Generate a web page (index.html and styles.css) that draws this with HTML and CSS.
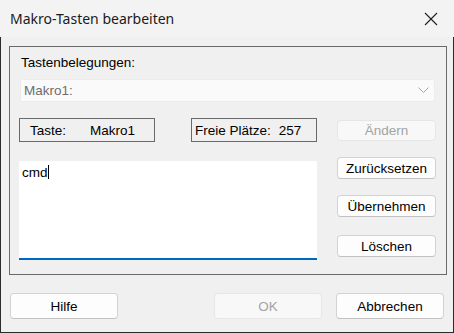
FILE: index.html
```html
<!DOCTYPE html>
<html lang="de">
<head>
    <meta charset="UTF-8">
    <title>Makro-Tasten bearbeiten</title>
    <link rel="stylesheet" href="styles.css">
</head>
<body>
<div class="fenster">
    <div class="titel">
        <span>Makro-Tasten bearbeiten</span>
        <svg class="schliessen" width="14" height="14" viewBox="0 0 14 14">
            <path d="M1 1 L13 13 M13 1 L1 13" stroke="#1f1f1f" stroke-width="1.1" fill="none"/>
        </svg>
    </div>
    <div class="inhalt">
        <div class="gruppe">
            <div class="label">Tastenbelegungen:</div>
            <div class="combo">
                <span>Makro1:</span>
                <svg width="11" height="7" viewBox="0 0 11 7">
                    <path d="M0.5 0.5 L5.5 5.5 L10.5 0.5" stroke="#a6a6a6" stroke-width="1" fill="none"/>
                </svg>
            </div>
            <div class="zeile">
                <div class="feld taste"><span>Taste:</span><span class="wert">Makro1</span></div>
                <div class="feld frei"><span>Freie Plätze:</span><span class="wert">257</span></div>
                <button class="knopf klein aus">Ändern</button>
            </div>
            <div class="bereich">
                <div class="eingabe">cmd<span class="cursor"></span></div>
                <div class="spalte">
                    <button class="knopf klein">Zurücksetzen</button>
                    <button class="knopf klein">Übernehmen</button>
                    <button class="knopf klein">Löschen</button>
                </div>
            </div>
        </div>
        <div class="fuss">
            <button class="knopf gross">Hilfe</button>
            <div class="rechts">
                <button class="knopf gross aus">OK</button>
                <button class="knopf gross">Abbrechen</button>
            </div>
        </div>
    </div>
</div>
</body>
</html>
```

FILE: styles.css
```css
body{
    margin: 0;
    background: #f0f0f0;
    font-family: "Liberation Sans", Arial, sans-serif;
    font-size: 13.5px;
    color: #000;
}

.fenster{
    width: 454px;
    height: 333px;
    display: flex;
    flex-direction: column;
}

.titel{
    height: 37px;
    background: #f3f3f3;
    display: flex;
    align-items: center;
    justify-content: space-between;
    padding: 0 16px 0 10px;
    font-family: "Noto Sans", sans-serif;
    font-size: 14px;
    color: #1a1a1a;
}
.titel span{ margin-top: -1px; }
.schliessen{ margin-top: 1px; }

.inhalt{
    flex: 1;
    background: #f0f0f0;
    border-left: 1px solid #2b2b2b;
    border-right: 1px solid #2b2b2b;
    border-bottom: 1px solid #2b2b2b;
    padding: 9px 6px 0 8px;
}

.gruppe{
    height: 229px;
    box-sizing: border-box;
    border: 1px solid #6a6a6a;
    padding: 8px 0 0 0;
}

.label{
    line-height: 16px;
    margin-left: 11px;
}

.combo{
    margin: 8px 0 0 10px;
    width: 415px;
    height: 23px;
    box-sizing: border-box;
    background: #fafafa;
    border: 1px solid #ececec;
    border-radius: 2px;
    display: flex;
    align-items: center;
    justify-content: space-between;
    padding: 0 5px 0 3px;
    color: #6d6d6d;
}

.zeile{
    margin: 16px 0 0 9px;
    display: flex;
    align-items: center;
}

.feld{
    height: 24px;
    box-sizing: border-box;
    border: 1px solid #6a6a6a;
    display: flex;
    align-items: center;
}
.taste{ width: 136px; padding-left: 10px; }
.taste .wert{ margin-left: 24px; }
.frei{ width: 126px; margin-left: 36px; padding-left: 3px; }
.frei .wert{ margin-left: 8px; }

.knopf{
    font-family: "Liberation Sans", Arial, sans-serif;
    font-size: 13.5px;
    color: #000;
    background: #fdfdfd;
    border: 1px solid #d3d3d3;
    border-bottom-color: #c2c2c2;
    border-radius: 4px;
    padding: 0;
    box-sizing: border-box;
}
.knopf.aus{
    color: #a3a3a3;
    background: #f8f8f8;
    border-color: #e6e6e6;
}
.klein{ width: 99px; height: 22px; }
.zeile .klein{ margin-left: 20px; height: 21px; }
.gross{ width: 108px; height: 26px; }

.bereich{
    margin: 15px 0 0 9px;
    display: grid;
    grid-template-columns: 298px 99px;
    column-gap: 20px;
    align-items: start;
}

.eingabe{
    margin-top: 4px;
    height: 99px;
    box-sizing: border-box;
    background: #fff;
    border-bottom: 2px solid #0067c0;
    padding: 4px 3px;
    line-height: 16px;
}
.cursor{
    display: inline-block;
    width: 1px;
    height: 14px;
    background: #000;
    vertical-align: -2px;
}

.spalte{
    display: flex;
    flex-direction: column;
    gap: 16px;
}
.spalte .knopf:last-child{ margin-top: 2px; }

.fuss{
    margin-top: 18px;
    display: flex;
    justify-content: space-between;
    padding-left: 1px;
    padding-right: 3px;
}
.rechts{
    display: flex;
    gap: 14px;
}
```
